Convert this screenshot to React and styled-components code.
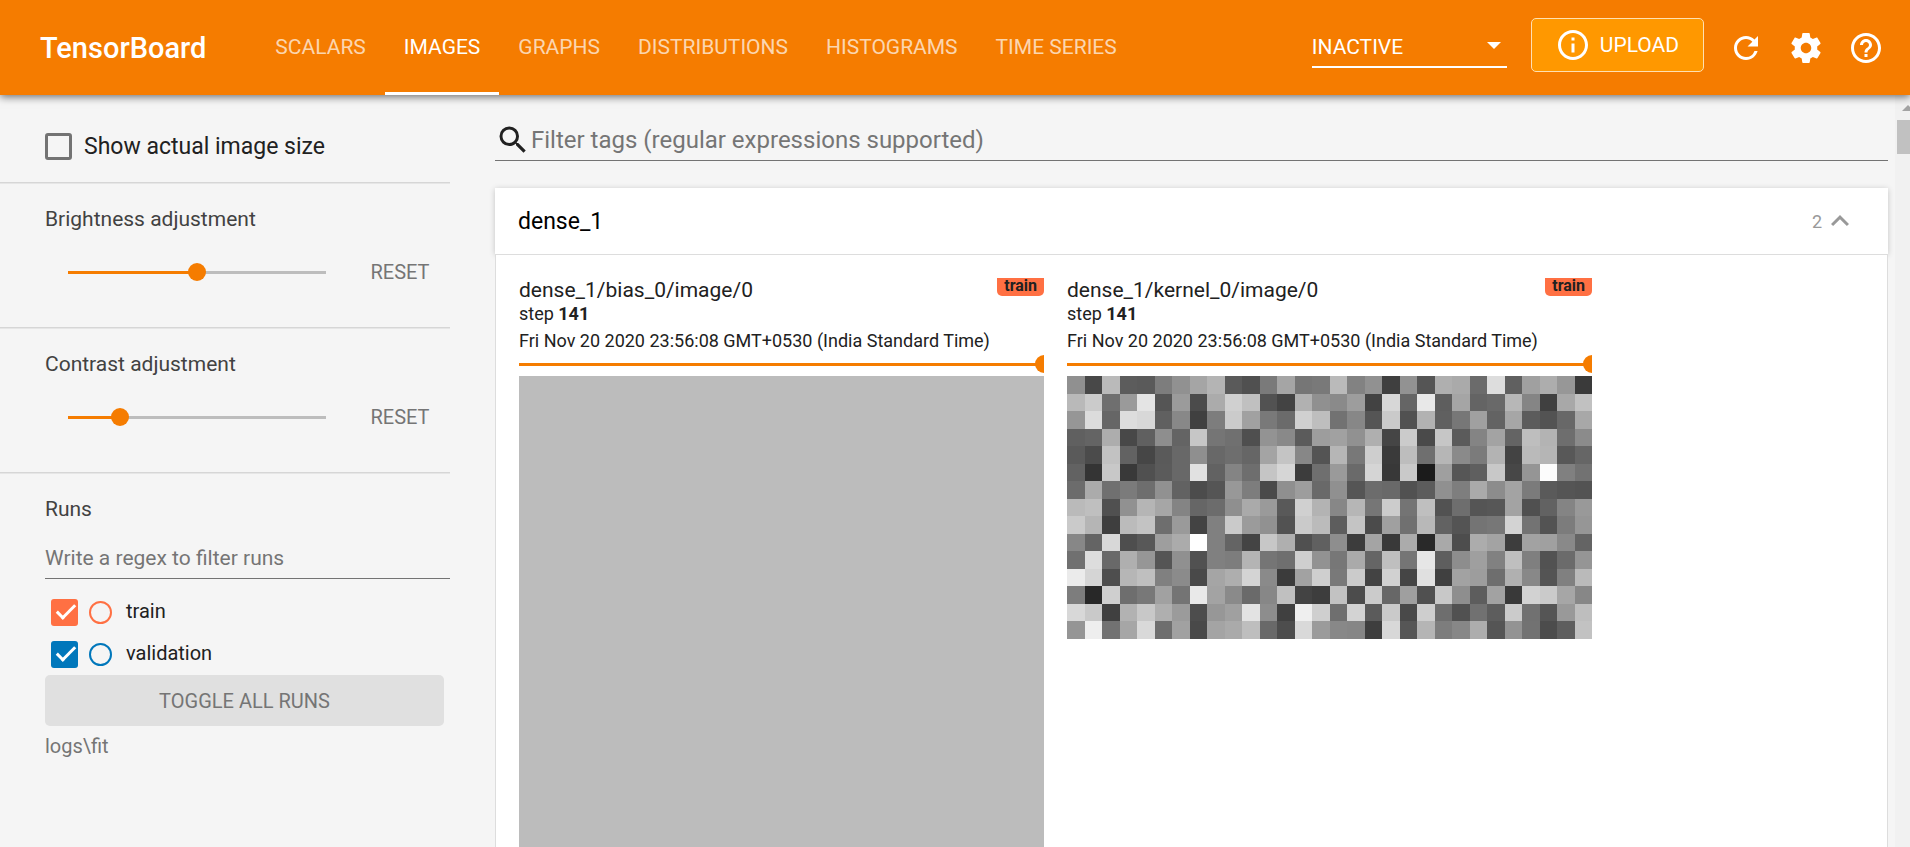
import React, { useState } from "react";
import styled, { createGlobalStyle } from "styled-components";
import {
  MdExpandLess,
  MdHelpOutline,
  MdInfoOutline,
  MdRefresh,
  MdSearch,
} from "react-icons/md";

const ORANGE = "#f57c00";

const GlobalStyle = createGlobalStyle`
  *, *::before, *::after { box-sizing: border-box; }
  body {
    margin: 0;
    background: #f5f5f5;
    color: #212121;
    font-family: Roboto, "Liberation Sans", sans-serif;
  }
  button, input, select { font-family: inherit; }
`;

const Page = styled.div`
  display: flex;
  flex-direction: column;
  height: 100vh;
  overflow: hidden;
`;

/* ---------- top bar ---------- */

const TopBar = styled.header`
  display: flex;
  flex: none;
  align-items: stretch;
  height: 95px;
  padding: 0 26px 0 40px;
  background: ${ORANGE};
  color: #fff;
  box-shadow: 0 2px 8px rgba(0, 0, 0, 0.55);
  z-index: 1;
`;

const Brand = styled.h1`
  align-self: center;
  margin: 0 50px 0 0;
  font-size: 29px;
  font-weight: 500;
  line-height: 36px;
`;

const Tabs = styled.nav`
  display: flex;
  flex: 1;
`;

const Tab = styled.a`
  display: flex;
  align-items: center;
  padding: 2px 19px 0;
  border-bottom: 3px solid ${(p) => (p.$active ? "#fff" : "transparent")};
  color: ${(p) => (p.$active ? "#fff" : "rgba(255, 255, 255, 0.7)")};
  font-size: 21px;
  font-weight: 400;
  text-decoration: none;
  white-space: nowrap;
`;

const Actions = styled.div`
  display: flex;
  align-items: center;
  gap: 24px;
`;

const SelectWrap = styled.label`
  display: flex;
  position: relative;
  width: 195px;
  border-bottom: 2px solid #fff;

  &::after {
    content: "";
    position: absolute;
    right: 6px;
    top: 14px;
    border: 7px solid transparent;
    border-top-color: #fff;
    border-bottom-width: 0;
    pointer-events: none;
  }
`;

const StatusSelect = styled.select`
  width: 100%;
  height: 38px;
  padding: 0;
  appearance: none;
  border: 0;
  background: transparent;
  color: #fff;
  font-size: 21px;
`;

const UploadButton = styled.button`
  display: flex;
  align-items: center;
  gap: 9px;
  height: 54px;
  margin-bottom: 6px;
  padding: 0 24px 0 23px;
  border: 1px solid #ffe0b2;
  border-radius: 5px;
  background: #ff9800;
  color: #fff;
  font-size: 21px;
`;

const IconButton = styled.button`
  display: flex;
  padding: 0;
  border: 0;
  background: none;
  color: #fff;
`;

/* ---------- side bar ---------- */

const Body = styled.div`
  display: flex;
  flex: 1;
  min-height: 0;
`;

const SideBar = styled.aside`
  flex: none;
  width: 450px;
`;

const Section = styled.section`
  padding: 24px 0 28px 45px;
  border-bottom: 1px solid #d6d6d6;
  box-shadow: 0 1px #e6e6e6;

  &:first-child { padding: 38px 0 22px 45px; }
  &:last-child { border: 0; box-shadow: none; }
`;

const CheckLabel = styled.label`
  display: flex;
  align-items: center;
  gap: 12px;
  font-size: 23px;
  line-height: 27px;
`;

const CheckBox = styled.input.attrs({ type: "checkbox" })`
  position: relative;
  flex: none;
  width: 27px;
  height: 27px;
  margin: 0;
  appearance: none;
  border: 3px solid #737373;
  border-radius: 3px;

  &:checked {
    border: 0;
    background: ${(p) => p.$color};
  }
  &:checked::after {
    content: "";
    position: absolute;
    left: 10px;
    top: 1px;
    width: 10px;
    height: 19px;
    border: solid #fff;
    border-width: 0 3px 3px 0;
    transform: rotate(45deg);
  }
`;

const Heading = styled.h2`
  margin: 0;
  color: #424242;
  font-size: 21px;
  font-weight: 400;
  line-height: 24px;
`;

const SliderRow = styled.div`
  display: flex;
  align-items: center;
  gap: 15px;
  height: 54px;
  margin: 14px 0 0 14px;
`;

const Slider = styled.input.attrs({ type: "range" })`
  flex: 1;
  min-width: 0;
  height: 24px;
  margin: 0;
  appearance: none;
  background: linear-gradient(
      to right,
      ${ORANGE} ${(p) => p.value}%,
      #bdbdbd ${(p) => p.value}%
    )
    center / calc(100% - 18px) 3px no-repeat;

  &::-webkit-slider-thumb {
    width: 18px;
    height: 18px;
    appearance: none;
    border-radius: 50%;
    background: ${ORANGE};
  }
`;

const ResetButton = styled.button`
  width: 100px;
  padding: 0;
  border: 0;
  background: none;
  color: #757575;
  font-size: 20px;
  line-height: 24px;
`;

const RunFilter = styled.input`
  display: block;
  width: 100%;
  height: 40px;
  margin: 18px 0 12px;
  padding: 0 0 2px;
  border: 0;
  border-bottom: 1px solid #737373;
  background: transparent;
  font-size: 21px;

  &::placeholder { color: #757575; opacity: 1; }
`;

const RunList = styled.ul`
  margin: 0;
  padding: 0 6px;
  list-style: none;
`;

const RunItem = styled.li`
  display: flex;
  align-items: center;
  gap: 11px;
  height: 42px;
`;

const Ring = styled.input.attrs({ type: "radio" })`
  width: 23px;
  height: 23px;
  margin: 0;
  appearance: none;
  border: 2px solid ${(p) => p.$color};
  border-radius: 50%;
`;

const RunName = styled.label`
  padding: 0 3px 2px;
  font-size: 20px;
  line-height: 24px;
`;

const ToggleButton = styled.button`
  display: block;
  width: calc(100% - 6px);
  height: 51px;
  border: 0;
  border-radius: 5px;
  background: #e0e0e0;
  color: #757575;
  font-size: 20px;
`;

const LogDir = styled.p`
  margin: 8px 0 0;
  color: #757575;
  font-size: 20px;
  line-height: 24px;
`;

/* ---------- main pane ---------- */

const Main = styled.main`
  flex: 1;
  min-width: 0;
  padding: 25px 7px 0 45px;
  overflow: hidden;
`;

const SearchField = styled.label`
  display: flex;
  align-items: center;
  height: 41px;
  margin-bottom: 27px;
  border-bottom: 1px solid #737373;
`;

const SearchInput = styled.input`
  flex: 1;
  padding: 0;
  border: 0;
  background: transparent;
  font-size: 24px;

  &::placeholder { color: #757575; opacity: 1; }
`;

const CardHead = styled.button`
  display: flex;
  align-items: center;
  width: 100%;
  height: 66px;
  padding: 0 30px 0 23px;
  border: 0;
  background: #fff;
  color: #000;
  font-size: 23px;
  text-align: left;
  box-shadow: 0 1px 6px rgba(0, 0, 0, 0.2);
`;

const CardTitle = styled.span`
  flex: 1;
`;

const CardCount = styled.span`
  display: flex;
  align-items: center;
  color: #999;
  font-size: 18px;
`;

const CardBody = styled.div`
  display: flex;
  flex-wrap: wrap;
  gap: 23px;
  position: relative;
  padding: 23px;
  border: 1px solid #ddd;
  background: #fff;
`;

const Item = styled.article`
  width: 525px;
`;

const ItemHead = styled.div`
  display: flex;
  align-items: flex-start;
  justify-content: space-between;
`;

const ItemTitle = styled.h3`
  margin: 0;
  font-size: 21px;
  font-weight: 400;
  line-height: 24px;
`;

const RunChip = styled.span`
  padding: 0 7px 2px;
  border-radius: 0 0 5px 5px;
  background: #ff7043;
  font-size: 16px;
  font-weight: 700;
  line-height: 16px;
`;

const StepLine = styled.p`
  margin: 0;
  font-size: 18px;
  line-height: 24px;
`;

const TimeLine = styled.time`
  display: block;
  margin-top: 4px;
  font-size: 18px;
  line-height: 22px;
  white-space: nowrap;
`;

const SliderClip = styled.div`
  overflow: hidden;
`;

const SliderTrack = styled.div`
  display: flex;
  margin: 0 -9px;
`;

const Picture = styled.svg`
  display: block;
  width: 100%;
`;

const ScrollBar = styled.div`
  flex: none;
  width: 15px;
  overflow: hidden;
  background: #f1f1f1;
`;

const ScrollArrow = styled.div`
  width: 12px;
  margin: 10px 0 9px 7px;
  border: 6px solid transparent;
  border-top-width: 0;
  border-bottom-color: #a3a3a3;
`;

const ScrollThumb = styled.div`
  height: 34px;
  margin-left: 2px;
  background: #c1c1c1;
`;

const TABS = ["SCALARS", "IMAGES", "GRAPHS", "DISTRIBUTIONS", "HISTOGRAMS", "TIME SERIES"];

const RUNS = [
  { name: "train", color: "#ff7043" },
  { name: "validation", color: "#0077bb" },
];

/* Grey level of each kernel weight, one row of the image per line. */
const KERNEL = [
  "9048BA5C5A7D91A5B45A507AA57679BA82913F9255AFAA6BDD60A0AD973A",
  "B9CB6F9AE4559B4BABD0C05243B1908A9D42D765E85EA56469B78540A8C1",
  "96DC66DDD86088407DCBA1796BD0BE728755CA51B26077A063A65C5368A8",
  "6064AD48608E64C675704F93895B9DA191AF45CB4AC65B84A364BEB36E8B",
  "5A4BC262465A688F686E66A4C48754B678CE3ABD6FB68A7BB343BAB55866",
  "6234C839505B68E162846EC5D63C6F9A6AD538C91B9F565FC84795FC8072",
  "6CAB707B6E91624C55987D4A8F9D6990556C69515C907EAA8CA37B5A5553",
  "BABF5091B5A684666C8FAA9A59D0B387B676CC74BF526E5557A350628499",
  "CAB53EBBC36E9A4380CA9B9152CABB5DC44BA070B862547477D373537C96",
  "8764D84E589EABFF806444C7AF50608E3CA439AB29A94DACA33DA2A08964",
  "70DD69AF96559051807DB4756FCF9277AA65BF75E65E8D9F81BF7F526B95",
  "EBD54EB6BF808B49A5AED48A3BA2CF79CB43D145E040A29D6EB0885480BA",
  "7D28CF6E78A174E9A38A6A87C0433DC24CCB679F50C88E5DA239D2CAA687",
  "D8C940B2C8AF9B4D97A0E38D40EFCF6FD35BCA49CE6E51715DCB715599BE",
  "95EE72A6D96EA149A4AABE694DD99B88863ED856B57D87AD5593724C5EC2",
].map((row) => row.match(/../g));

const BIAS = [["BC"]];

const ITEMS = [
  { tag: "dense_1/bias_0/image/0", pixels: BIAS },
  { tag: "dense_1/kernel_0/image/0", pixels: KERNEL },
];

function SettingsIcon() {
  return (
    <svg width="36" height="36" viewBox="0 0 24 24" fill="currentColor" aria-hidden="true">
      <path d="M19.43 12.98c.04-.32.07-.64.07-.98s-.03-.66-.07-.98l2.11-1.65c.19-.15.24-.42.12-.64l-2-3.46c-.12-.22-.39-.3-.61-.22l-2.49 1c-.52-.4-1.08-.73-1.69-.98l-.38-2.65C14.46 2.18 14.25 2 14 2h-4c-.25 0-.46.18-.49.42l-.38 2.65c-.61.25-1.17.59-1.69.98l-2.49-1c-.23-.09-.49 0-.61.22l-2 3.46c-.13.22-.07.49.12.64l2.11 1.65c-.04.32-.07.65-.07.98s.03.66.07.98l-2.11 1.65c-.19.15-.24.42-.12.64l2 3.46c.12.22.39.3.61.22l2.49-1c.52.4 1.08.73 1.69.98l.38 2.65c.03.24.24.42.49.42h4c.25 0 .46-.18.49-.42l.38-2.65c.61-.25 1.17-.59 1.69-.98l2.49 1c.23.09.49 0 .61-.22l2-3.46c.12-.22.07-.49-.12-.64l-2.11-1.65zM12 15.5c-1.93 0-3.5-1.57-3.5-3.5s1.57-3.5 3.5-3.5 3.5 1.57 3.5 3.5-1.57 3.5-3.5 3.5z" />
    </svg>
  );
}

function TensorImage({ pixels, label }) {
  return (
    <Picture
      viewBox={`0 0 ${pixels[0].length} ${pixels.length}`}
      shapeRendering="crispEdges"
      role="img"
      aria-label={label}
    >
      {pixels.map((row, y) =>
        row.map((v, x) => (
          <rect key={`${x}-${y}`} x={x} y={y} width="1" height="1" fill={`#${v}${v}${v}`} />
        ))
      )}
    </Picture>
  );
}

function Adjustment({ title, initial }) {
  const [value, setValue] = useState(initial);
  return (
    <Section>
      <Heading>{title}</Heading>
      <SliderRow>
        <Slider
          aria-label={title}
          value={value}
          onChange={(e) => setValue(Number(e.target.value))}
        />
        <ResetButton onClick={() => setValue(initial)}>RESET</ResetButton>
      </SliderRow>
    </Section>
  );
}

function ImageItem({ tag, pixels }) {
  const [step, setStep] = useState(100);
  return (
    <Item>
      <ItemHead>
        <ItemTitle>{tag}</ItemTitle>
        <RunChip>train</RunChip>
      </ItemHead>
      <StepLine>
        step <b>141</b>
      </StepLine>
      <TimeLine>Fri Nov 20 2020 23:56:08 GMT+0530 (India Standard Time)</TimeLine>
      <SliderClip>
        <SliderTrack>
          <Slider
            aria-label={`${tag} step`}
            value={step}
            onChange={(e) => setStep(Number(e.target.value))}
          />
        </SliderTrack>
      </SliderClip>
      <TensorImage pixels={pixels} label={tag} />
    </Item>
  );
}

export default function App() {
  return (
    <Page>
      <GlobalStyle />
      <TopBar>
        <Brand>TensorBoard</Brand>
        <Tabs>
          {TABS.map((name) => (
            <Tab key={name} href="#" $active={name === "IMAGES"}>
              {name}
            </Tab>
          ))}
        </Tabs>
        <Actions>
          <SelectWrap>
            <StatusSelect aria-label="Inactive dashboards">
              <option>INACTIVE</option>
            </StatusSelect>
          </SelectWrap>
          <UploadButton>
            <MdInfoOutline size={36} />
            UPLOAD
          </UploadButton>
          <IconButton aria-label="Reload">
            <MdRefresh size={36} />
          </IconButton>
          <IconButton aria-label="Settings">
            <SettingsIcon />
          </IconButton>
          <IconButton aria-label="Help">
            <MdHelpOutline size={36} />
          </IconButton>
        </Actions>
      </TopBar>
      <Body>
        <SideBar>
          <Section>
            <CheckLabel>
              <CheckBox $color={ORANGE} />
              Show actual image size
            </CheckLabel>
          </Section>
          <Adjustment title="Brightness adjustment" initial={50} />
          <Adjustment title="Contrast adjustment" initial={20} />
          <Section>
            <Heading>Runs</Heading>
            <RunFilter aria-label="Filter runs" placeholder="Write a regex to filter runs" />
            <RunList>
              {RUNS.map((run) => (
                <RunItem key={run.name}>
                  <CheckBox id={`run-${run.name}`} $color={run.color} defaultChecked />
                  <Ring name="only-run" aria-label={`Only ${run.name}`} $color={run.color} />
                  <RunName htmlFor={`run-${run.name}`}>{run.name}</RunName>
                </RunItem>
              ))}
            </RunList>
            <ToggleButton>TOGGLE ALL RUNS</ToggleButton>
            <LogDir>logs\fit</LogDir>
          </Section>
        </SideBar>
        <Main>
          <SearchField>
            <MdSearch size={36} color="#212121" />
            <SearchInput
              aria-label="Filter tags"
              placeholder="Filter tags (regular expressions supported)"
            />
          </SearchField>
          <CardHead aria-expanded="true">
            <CardTitle>dense_1</CardTitle>
            <CardCount>
              2
              <MdExpandLess size={36} />
            </CardCount>
          </CardHead>
          <CardBody>
            {ITEMS.map((item) => (
              <ImageItem key={item.tag} {...item} />
            ))}
          </CardBody>
        </Main>
        <ScrollBar>
          <ScrollArrow />
          <ScrollThumb />
        </ScrollBar>
      </Body>
    </Page>
  );
}
